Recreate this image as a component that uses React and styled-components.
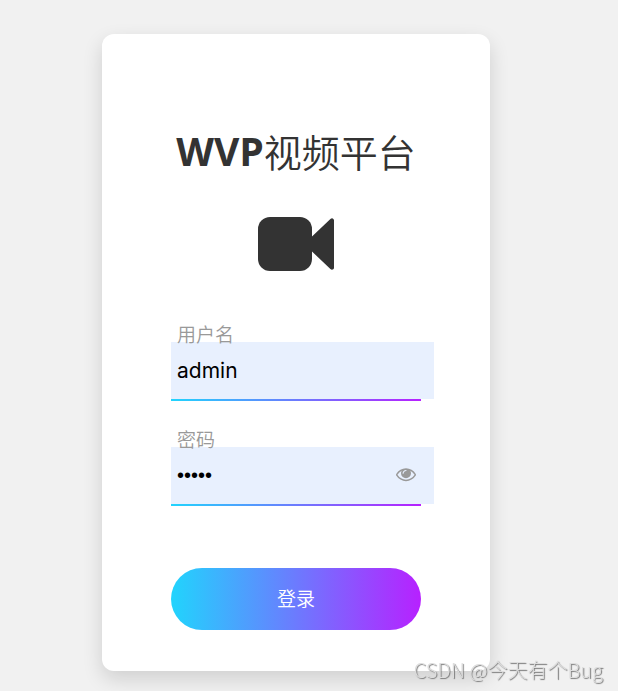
import React, {useState} from 'react'
import styled, {createGlobalStyle} from 'styled-components'

const GlobalStyle = createGlobalStyle`
    * {box-sizing: border-box;}
    body {
        margin: 0;
        background: #f1f1f1;
        font-family: 'Noto Sans CJK SC', sans-serif;
    }
`

const gradient = 'linear-gradient(to right, #21d4fd, #b721ff)'

const Page = styled.main`
    display: flex;
    justify-content: center;
    align-items: flex-start;
    min-height: 100vh;
    padding: 34px 41px 20px 15px;
`

const Card = styled.form`
    width: 100%;
    max-width: 388px;
    padding: 94px 69px 41px;
    background: #fff;
    border-radius: 12px;
    box-shadow: 0 8px 20px rgba(0, 0, 0, .14);
`

const Title = styled.h1`
    display: flex;
    justify-content: center;
    margin: 0 0 43px;
    font-family: 'Noto Sans', 'Noto Sans CJK SC', sans-serif;
    font-size: 39px;
    font-weight: 700;
    line-height: 46px;
    color: #333;
    white-space: nowrap;
`

const TitleName = styled.span`
    font-family: 'Noto Sans CJK SC', sans-serif;
    font-size: 38px;
    font-weight: 350;
`

const Logo = styled.svg`
    display: block;
    width: 76px;
    height: 54px;
    margin: 0 auto 53px;
    fill: #333;
`

const Field = styled.div`
    display: flex;
    flex-direction: column;
    margin-bottom: 28px;
`

const Label = styled.label`
    position: relative;
    z-index: 1;
    margin-bottom: -2px;
    padding-left: 6px;
    font-size: 19px;
    font-weight: 350;
    line-height: 20px;
    color: #999;
`

const InputRow = styled.div`
    position: relative;
    display: flex;
    margin-right: -13px;
`

const Input = styled.input`
    flex: 1;
    min-width: 0;
    height: 57px;
    padding: 0 6px;
    border: 0;
    outline: 0;
    background: #e8f0fe;
    font-family: Inter, sans-serif;
    font-size: 21px;
    color: #000;

    &[type='password'] {
        font-family: 'Liberation Sans', sans-serif;
        font-size: 20px;
    }
`

const Underline = styled.div`
    height: 2px;
    background: ${gradient};
`

const EyeButton = styled.button`
    position: absolute;
    top: 0;
    right: 18px;
    display: flex;
    align-items: center;
    height: 100%;
    padding: 0 0 4px;
    border: 0;
    background: none;
    cursor: pointer;

    svg {
        width: 20px;
        height: 20px;
        fill: #999;
    }
`

const LoginButton = styled.button`
    width: 100%;
    height: 62px;
    margin-top: 34px;
    padding: 0 0 4px;
    border: 0;
    border-radius: 31px;
    background: ${gradient};
    font-family: 'Noto Sans CJK SC', sans-serif;
    font-size: 19px;
    font-weight: 350;
    color: #fff;
    cursor: pointer;
`

const Watermark = styled.div`
    position: fixed;
    right: 15px;
    bottom: 7px;
    font-size: 20px;
    font-weight: 300;
    line-height: 28px;
    color: #ddd;
    text-shadow: 1px 1px 1px #777;
`

const CameraLogo = () => (
    <Logo viewBox="0 0 76 54" aria-hidden="true">
        <rect width="54" height="54" rx="12" />
        <path d="M54 19.5 72.4 2Q73.5 1 74.7 1.4T76 3.3V50.7Q76 52.2 74.7 52.6T72.4 52L54 34.5Z" />
    </Logo>
)

const EyeIcon = () => (
    <svg viewBox="0 0 1792 1792" aria-hidden="true">
        <path d="M1664 960q-152-236-381-353 61 104 61 225 0 185-131.5 316.5t-316.5 131.5-316.5-131.5-131.5-316.5q0-121 61-225-229 117-381 353 133 205 333.5 326.5t434.5 121.5 434.5-121.5 333.5-326.5zm-720-384q0-20-14-34t-34-14q-125 0-214.5 89.5t-89.5 214.5q0 20 14 34t34 14 34-14 14-34q0-86 61-147t147-61q20 0 34-14t14-34zm848 384q0 34-20 69-140 230-376.5 368.5t-499.5 138.5-499.5-139-376.5-368q-20-35-20-69t20-69q140-229 376.5-368t499.5-139 499.5 139 376.5 368q20 35 20 69z" />
    </svg>
)

export default function App() {
    const [username, setUsername] = useState('admin')
    const [password, setPassword] = useState('admin')
    const [visible, setVisible] = useState(false)

    return (
        <>
            <GlobalStyle />
            <Page>
                <Card onSubmit={e => e.preventDefault()}>
                    <Title>WVP<TitleName>视频平台</TitleName></Title>
                    <CameraLogo />
                    <Field>
                        <Label htmlFor="username">用户名</Label>
                        <InputRow>
                            <Input
                                id="username"
                                type="text"
                                value={username}
                                onChange={e => setUsername(e.target.value)}
                            />
                        </InputRow>
                        <Underline />
                    </Field>
                    <Field>
                        <Label htmlFor="password">密码</Label>
                        <InputRow>
                            <Input
                                id="password"
                                type={visible ? 'text' : 'password'}
                                value={password}
                                onChange={e => setPassword(e.target.value)}
                            />
                            <EyeButton type="button" aria-label="显示密码" onClick={() => setVisible(!visible)}>
                                <EyeIcon />
                            </EyeButton>
                        </InputRow>
                        <Underline />
                    </Field>
                    <LoginButton type="submit">登录</LoginButton>
                </Card>
            </Page>
            <Watermark>CSDN @今天有个Bug</Watermark>
        </>
    )
}
